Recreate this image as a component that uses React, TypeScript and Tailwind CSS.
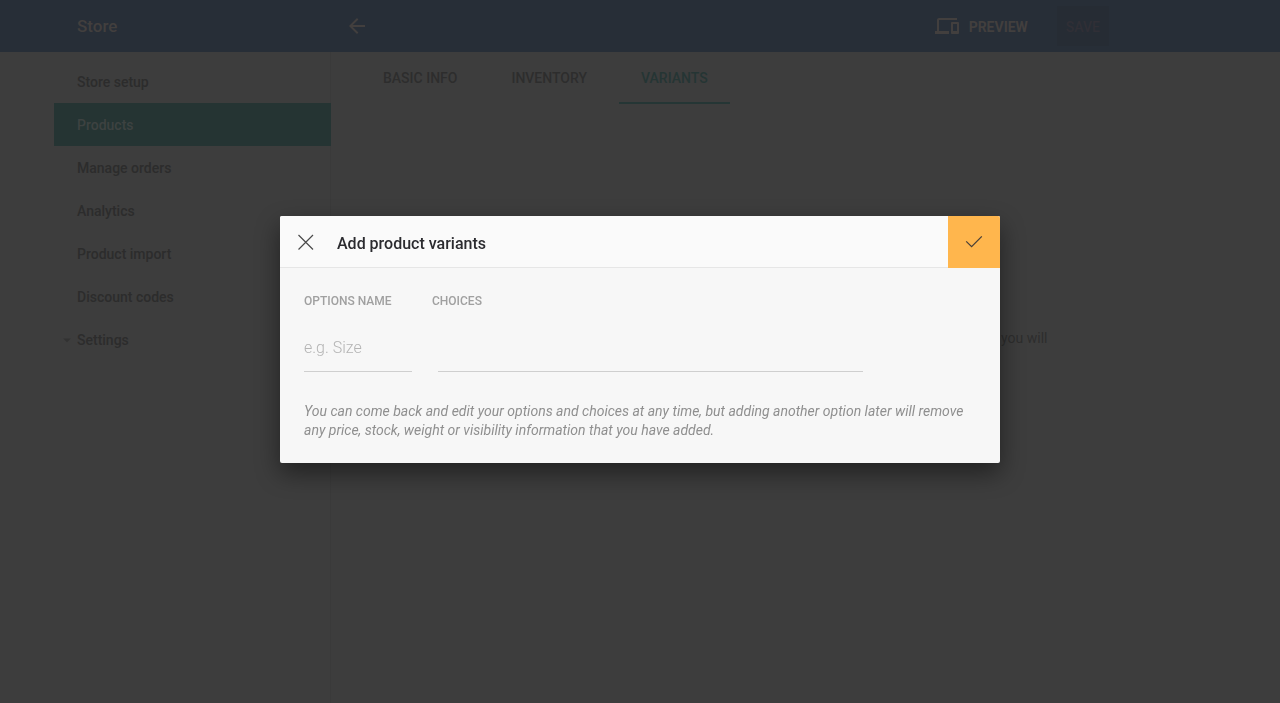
import { MdArrowBack, MdArrowDropDown, MdDevices } from 'react-icons/md'

const NAV = ['Store setup', 'Products', 'Manage orders', 'Analytics', 'Product import', 'Discount codes', 'Settings']
const TABS = ['Basic info', 'Inventory', 'Variants']

function TopBar() {
  return (
    <header className="flex h-[52px] items-center bg-[#272e37] text-[#423f3e]">
      <h1 className="w-[345px] shrink-0 pl-[77px] pt-0.5 text-[17px] font-medium">Store</h1>
      <button type="button" aria-label="Back">
        <MdArrowBack size={24} />
      </button>
      <div className="ml-auto mr-[171px] flex items-center">
        <button type="button" className="flex items-center gap-2.5 text-sm font-bold uppercase">
          <MdDevices size={24} />
          <span className="pt-0.5">Preview</span>
        </button>
        <button
          type="button"
          className="ml-[29px] h-10 rounded-xs bg-[#262c34] px-[9px] pt-0.5 text-sm font-medium uppercase text-[#302f36]"
        >
          Save
        </button>
      </div>
    </header>
  )
}

function Sidebar() {
  return (
    <nav aria-label="Store" className="w-[331px] shrink-0 border-r border-[#3a3a3a] pl-[54px] pt-2">
      {NAV.map((item) => (
        <a
          key={item}
          href="#"
          className={
            item === 'Products'
              ? '-mr-px flex h-[43px] items-center bg-[#253433] pl-[23px] text-sm font-medium text-[#3d4241]'
              : 'relative flex h-[43px] items-center pl-[23px] text-sm font-medium text-[#2c2c2c]'
          }
        >
          {item === 'Settings' && <MdArrowDropDown size={18} className="absolute left-1 text-[#323232]" />}
          {item}
        </a>
      ))}
    </nav>
  )
}

function VariantsDialog() {
  return (
    <div className="fixed inset-0 flex items-center justify-center pb-6">
      <section
        role="dialog"
        aria-modal="true"
        aria-labelledby="dialog-title"
        className="w-full max-w-[720px] overflow-hidden rounded-xs bg-[#f7f7f7] shadow-[0_10px_24px_rgba(0,0,0,0.45)]"
      >
        <header className="flex h-[52px] items-stretch bg-[#fafafa]">
          <div className="flex flex-1 items-center border-b border-[#e6e6e6] pl-4">
            <button type="button" aria-label="Close" className="text-[#4a4a4a]">
              <svg width="20" height="20" viewBox="0 0 20 20" fill="none" stroke="currentColor" strokeWidth="1.2">
                <path d="M2.5 3 17 17.5M17 3 2.5 17.5" />
              </svg>
            </button>
            <h2 id="dialog-title" className="ml-[21px] pt-1 text-base font-medium text-[#2b2b2f]">
              Add product variants
            </h2>
          </div>
          <button type="submit" aria-label="Done" className="flex w-[52px] items-center justify-center bg-[#ffb64d] text-[#4a4038]">
            <svg width="20" height="20" viewBox="0 0 20 20" fill="none" stroke="currentColor" strokeWidth="1.3">
              <path d="M2.2 9.4 7.6 14.6 17.8 4.4" />
            </svg>
          </button>
        </header>

        <div className="px-6 pb-[23px] pt-[23px]">
          <div className="flex gap-5">
            <div className="w-[108px]">
              <label htmlFor="option-name" className="block whitespace-nowrap text-xs/5 font-medium uppercase text-[#a0a0a0]">
                Options name
              </label>
              <input
                id="option-name"
                placeholder="e.g. Size"
                className="mt-3 h-[49px] w-full border-b border-[#cfcfcf] bg-transparent text-base font-light outline-none placeholder:text-[#b4b4b4]"
              />
            </div>
            <div className="flex-1 pr-[113px]">
              <label htmlFor="option-choices" className="block text-xs/5 font-medium uppercase text-[#a0a0a0]">
                Choices
              </label>
              <div className="pl-1.5">
                <input
                  id="option-choices"
                  className="mt-3 h-[49px] w-full border-b border-[#cfcfcf] bg-transparent text-base font-light outline-none"
                />
              </div>
            </div>
          </div>
          <p className="mt-[30px] text-sm/[19px] italic text-[#8f8f8f]">
            You can come back and edit your options and choices at any time, but adding another option later will remove
            any price, stock, weight or visibility information that you have added.
          </p>
        </div>
      </section>
    </div>
  )
}

export default function App() {
  return (
    <div className="flex min-h-screen flex-col bg-[#3d3d3d] font-[Roboto,sans-serif]">
      <TopBar />
      <div className="flex flex-1">
        <Sidebar />
        <main className="flex-1">
          <nav aria-label="Product" className="flex gap-2.5 pl-[30px]">
            {TABS.map((tab) => (
              <a
                key={tab}
                href="#"
                className={
                  tab === 'Variants'
                    ? 'h-[52px] border-b-2 border-[#253635] px-[22px] text-sm/[52px] font-medium uppercase text-[#253534]'
                    : 'h-[52px] px-[22px] text-sm/[52px] font-medium uppercase text-[#2d2d2d]'
                }
              >
                {tab}
              </a>
            ))}
          </nav>
          <p className="mx-auto mt-[224px] max-w-[484px] text-right text-sm text-[#2d2d2d]">you will</p>
        </main>
      </div>
      <VariantsDialog />
    </div>
  )
}
